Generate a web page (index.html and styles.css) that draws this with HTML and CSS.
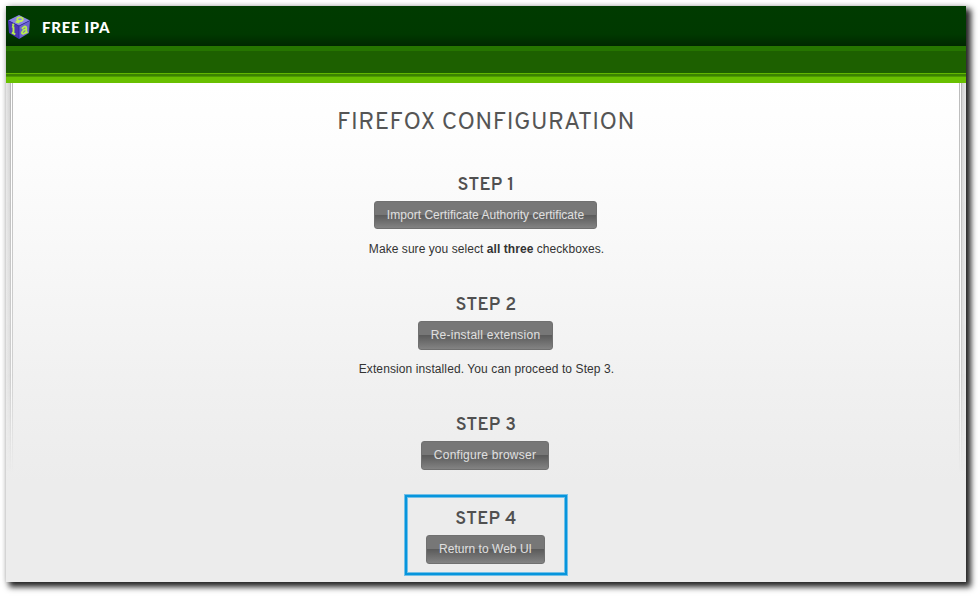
FILE: index.html
```html
<!DOCTYPE html>
<html lang="en">
<head>
<meta charset="utf-8">
<title>Firefox configuration</title>
<link rel="stylesheet" href="styles.css">
</head>
<body>
<div class="window">
  <header class="header">
    <svg class="logo" viewBox="0 0 24 26" width="24" height="26" aria-hidden="true">
      <path d="M12 1L23 6.5L12 12L1 6.5Z" fill="#8984e4"/>
      <path d="M1 6.5L12 12V25L2 19Z" fill="#4a36b5"/>
      <path d="M23 6.5L12 12V25L22 19Z" fill="#6c63cf"/>
      <path d="M1 6.5L12 12L23 6.5M12 12V25" fill="none" stroke="#3026a0" stroke-width=".8"/>
      <path d="M8.6 7.6L12.4 8.6" stroke="#b8ef4f" stroke-width="1.8" fill="none"/>
      <ellipse cx="13" cy="5.2" rx="2.8" ry="1.9" fill="none" stroke="#b8ef4f" stroke-width="1.8"/>
      <path d="M6.5 13V20M5 12.5L7 13.4M4.8 18.6L8.3 20.4" stroke="#b8ef4f" stroke-width="1.9" fill="none"/>
      <circle cx="6.2" cy="10.7" r="1.2" fill="#b8ef4f"/>
      <path d="M14.8 14.8L17.2 12.7Q19.3 12 19.3 14V18.6L20.7 18M19 15L16.4 16.3Q14.5 18 15 19.4Q16.5 20.8 19 17.7" stroke="#b8ef4f" stroke-width="1.8" fill="none"/>
    </svg>
    <span class="brand">FREE IPA</span>
  </header>
  <div class="nav"></div>
  <main class="content">
    <div class="rail left"></div>
    <div class="rail right"></div>
    <h1>FIREFOX CONFIGURATION</h1>
    <section class="step first">
      <h2>STEP 1</h2>
      <button class="b1">Import Certificate Authority certificate</button>
      <p class="p1">Make sure you select <b>all three</b> checkboxes.</p>
    </section>
    <section class="step">
      <h2>STEP 2</h2>
      <button class="b2">Re-install extension</button>
      <p class="p2">Extension installed. You can proceed to Step 3.</p>
    </section>
    <section class="step third">
      <h2>STEP 3</h2>
      <button class="b3">Configure browser</button>
    </section>
    <section class="step highlight">
      <h2>STEP 4</h2>
      <button class="b4">Return to Web UI</button>
    </section>
  </main>
</div>
</body>
</html>
```
FILE: styles.css
```css
* { box-sizing: border-box; }
body {
  margin: 0;
  padding: 6px;
  height: 596px;
  overflow: hidden;
  background: #fff;
  font: 12px/16px "Liberation Sans", Arial, sans-serif;
  color: #333;
}
.window {
  width: 960px;
  height: 576px;
  box-shadow: 4px 4px 6px 1px rgba(0, 0, 0, .85), 0 0 6px rgba(0, 0, 0, .15);
}
.header {
  display: flex;
  align-items: center;
  height: 40px;
  padding: 2px 0 0 1px;
  background: linear-gradient(#003b00, #003900 70%, #002700);
}
.brand {
  margin-left: 11px;
  font: 900 15px/20px Lato, sans-serif;
  letter-spacing: .7px;
  color: #fff;
}
.nav {
  height: 37px;
  background: linear-gradient(#267500 0 5px, #1d6000 5px 27px, #62b700 27px 28px, #3b8300 28px 30px, #4e9b00 30px 31px, #69c000 31px 100%);
}
.content {
  position: relative;
  display: flex;
  flex-direction: column;
  align-items: center;
  height: 499px;
  background: linear-gradient(#fff, #fdfdfd 60px, #f8f8f8 165px, #f0f0f0 310px, #ececec 400px);
}
.rail {
  position: absolute;
  top: 0;
  width: 7px;
  height: 390px;
  background: linear-gradient(90deg, #e6e6e6 0, #d2d2d2 4px, #b8b8b8 4px 5px, #fff 5px 6px, #bbb 6px 7px);
  -webkit-mask-image: linear-gradient(#000, rgba(0, 0, 0, .6) 75%, transparent);
  mask-image: linear-gradient(#000, rgba(0, 0, 0, .6) 75%, transparent);
}
.left { left: 0; }
.right { right: 0; transform: scaleX(-1); }
h1, h2, p { margin: 0; white-space: nowrap; }
h1 {
  margin-top: 25px;
  height: 30px;
  font: 400 24px/30px Overpass, Roboto, sans-serif;
  letter-spacing: .5px;
  color: #555;
}
.step {
  display: flex;
  flex-direction: column;
  align-items: center;
  height: 120px;
}
.first { margin-top: 37px; }
.third { height: 79px; }
h2 {
  height: 26px;
  font: 600 18px/22px Overpass, Roboto, sans-serif;
  letter-spacing: .3px;
  color: #505050;
}
button {
  height: 29px;
  margin: 0 1px 0 0;
  padding: 0 0 1px;
  border: 1px solid #707070;
  border-radius: 3px;
  background: linear-gradient(#777 0 48%, #5b5b5b 50%, #838383);
  font: 12px/16px "Liberation Sans", Arial, sans-serif;
  color: #e0e0e0;
  white-space: nowrap;
}
.b1 { width: 223px; height: 28px; margin-bottom: 1px; letter-spacing: .03px; }
.b2 { width: 135px; letter-spacing: .25px; }
.b3 { width: 128px; margin-right: 2px; letter-spacing: .25px; }
.b4 { width: 119px; letter-spacing: .03px; }
p { margin-top: 11px; padding-left: 1px; }
.p1 { letter-spacing: .06px; }
.p2 { letter-spacing: .1px; }
.highlight {
  width: 164px;
  height: 82px;
  padding-top: 14px;
  border: 1px solid #72c0e8;
  box-shadow: inset 0 0 0 2px #0795dc, inset 0 0 0 3px #72c0e8;
}
```
